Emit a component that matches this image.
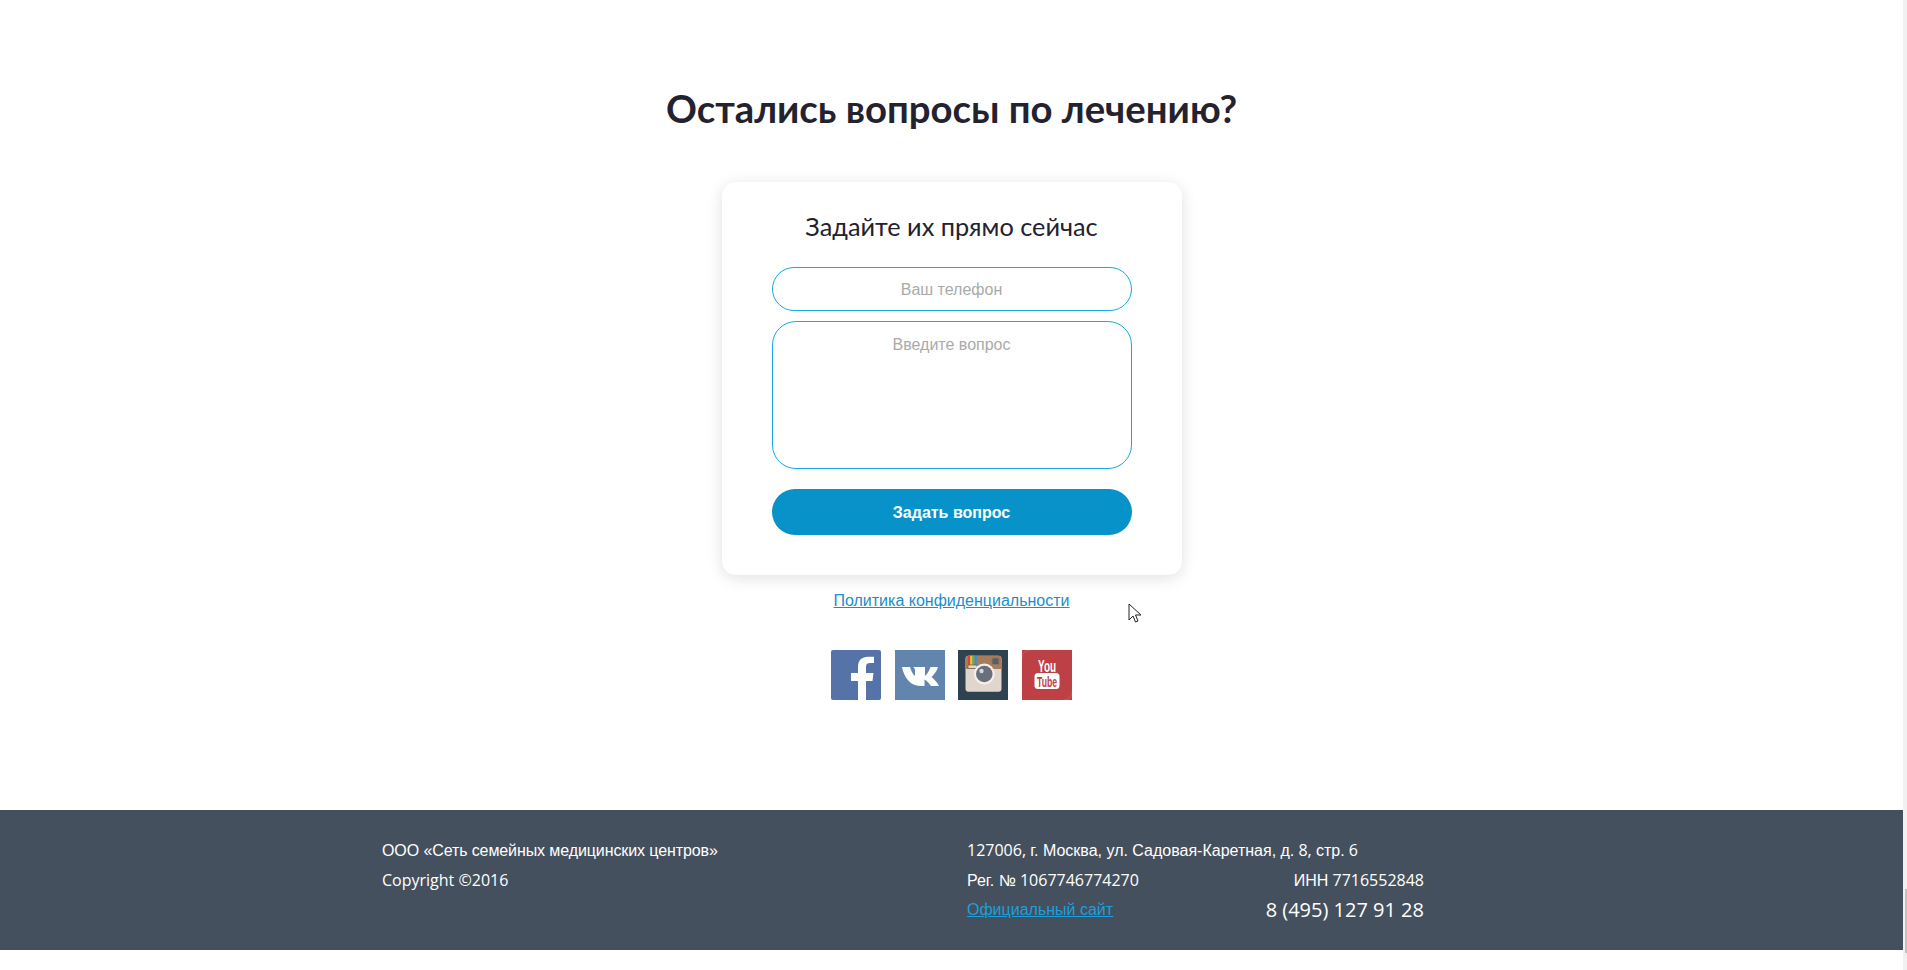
<div class="page">
	<main>
		<section class="ask">
			<h2>Остались вопросы по лечению?</h2>

			<form class="card" onsubmit={(e) => e.preventDefault()}>
				<h3>Задайте их прямо сейчас</h3>
				<input type="text" placeholder="Ваш телефон" />
				<textarea placeholder="Введите вопрос"></textarea>
				<button type="submit">Задать вопрос</button>
			</form>

			<a class="policy" href="#policy">Политика конфиденциальности</a>

			<div class="social">
				<a href="#fb" aria-label="Facebook">
					<svg viewBox="0 0 50 50" width="50" height="50">
						<rect width="50" height="50" rx="2" fill="#5673a9" />
						<path fill="#fff" d="M27 50V31h-7v-8h7v-6c0-7 4-10.300 10-10.300h6V13h-4c-3 0-4 1.200-4 4v6h7.500l-1 8H35v19z" />
					</svg>
				</a>
				<a href="#vk" aria-label="VK">
					<svg viewBox="0 0 50 50" width="50" height="50">
						<rect width="50" height="50" fill="#6285ae" />
						<path fill="#fff" d="M7 17h8c1.500 5 3.500 8 5 9v-6c0-1.500-1-2.300-2-3h12v9c2-1.500 4-5 5.500-9H43c-1 4-4.500 8-6.500 10 3 2.500 6 5.500 7.500 9h-8c-1.500-2.500-4-5-6.500-6.500V36h-4C15 36 9 27 7 17z" />
					</svg>
				</a>
				<a href="#ig" aria-label="Instagram">
					<svg viewBox="0 0 50 50" width="50" height="50">
						<rect width="50" height="50" fill="#2f4250" />
						<rect x="7.500" y="5.700" width="36" height="36" rx="3" fill="#e0d6cc" />
						<path fill="#a67c5b" d="M7.500 19V8.700c0-2 1-3 3-3h30c2 0 3 1 3 3V19z" />
						<rect x="10" y="5.700" width="2.200" height="9.500" fill="#d9453d" />
						<rect x="12.200" y="5.700" width="2.200" height="9.500" fill="#f2c230" />
						<rect x="14.400" y="5.700" width="2.200" height="9.500" fill="#6dae4f" />
						<rect x="16.600" y="5.700" width="2.200" height="9.500" fill="#3f8fd0" />
						<rect x="10" y="15" width="9" height="3.500" rx="1" fill="#e0d6cc" stroke="#5c4a3c" stroke-width=".6" />
						<rect x="34" y="8" width="7" height="6.500" rx="1" fill="#5b5f63" stroke="#8d7561" />
						<circle cx="26.300" cy="24" r="10.500" fill="#f4efe9" />
						<circle cx="26.300" cy="24" r="8.300" fill="#6a6f7e" />
						<circle cx="23.500" cy="21" r="2.200" fill="#d5d7dd" />
					</svg>
				</a>
				<a href="#yt" aria-label="YouTube">
					<svg viewBox="0 0 50 50" width="50" height="50">
						<rect width="50" height="50" fill="#bd4044" />
						<path d="M0 9Q0 0 9 0M50 41Q50 50 41 50" fill="none" stroke="#cf6a6d" stroke-width=".6" />
						<rect x="12.500" y="23" width="25" height="16" rx="3.500" fill="#fff" />
						<text x="16" y="22" textLength="18" lengthAdjust="spacingAndGlyphs" class="yt-you">You</text>
						<text x="15" y="36.500" textLength="20" lengthAdjust="spacingAndGlyphs" class="yt-tube">Tube</text>
					</svg>
				</a>
			</div>
		</section>

		<footer>
			<div class="foot-inner">
				<div class="foot-left">
					<p><span class="ru tight">ООО «Сеть семейных медицинских центров»</span></p>
					<p>Copyright ©2016</p>
				</div>
				<div class="foot-right">
					<p>127006, <span class="ru">г. Москва, ул. Садовая-Каретная, д.</span> 8, <span class="ru">стр.</span> 6</p>
					<p class="split"><span><span class="ru">Рег. №</span> 1067746774270</span><span><span class="ru">ИНН</span> 7716552848</span></p>
					<p class="split"><a class="ru" href="#site">Официальный сайт</a><span class="phone">8 (495) 127 91 28</span></p>
				</div>
			</div>
		</footer>
		<div class="tail"></div>
	</main>
	<aside class="scrollbar"><div class="thumb"></div></aside>
</div>

<svg class="cursor" width="14" height="22" viewBox="0 0 14 22">
	<path d="M1 1v16l4-4 2.500 6 2.500-1-2.500-6H13z" fill="#fff" stroke="#222" stroke-width="1" />
</svg>

<style>
	:global(body) {
		background: #fff;
		overflow: hidden;
	}

	.page {
		display: flex;
		height: 970px;
		font-family: "Liberation Sans", sans-serif;
	}

	main {
		flex: 1;
		display: flex;
		flex-direction: column;
	}

	.scrollbar {
		width: 4px;
		background: #f1f1f1;
		display: flex;
		justify-content: flex-end;
		padding-top: 889px;
		box-sizing: border-box;
	}

	.thumb {
		width: 2px;
		height: 64px;
		background: #c1c1c1;
	}

	.ask {
		flex: 1;
		display: flex;
		flex-direction: column;
		align-items: center;
		padding-top: 83px;
		box-sizing: border-box;
	}

	h2 {
		margin: 0 0 49px;
		font-family: Lato, sans-serif;
		font-size: 38.300px;
		line-height: 50px;
		font-weight: 700;
		color: #23222e;
	}

	.card {
		width: 460px;
		height: 393px;
		box-sizing: border-box;
		padding: 28px 50px 0;
		background: #fff;
		border-radius: 14px;
		box-shadow: 0 3px 16px rgba(0, 0, 0, 0.12);
		display: flex;
		flex-direction: column;
	}

	h3 {
		margin: 0 0 25px;
		font-family: Lato, sans-serif;
		font-size: 25.300px;
		line-height: 32px;
		font-weight: 400;
		text-align: center;
		color: #23222e;
	}

	input,
	textarea {
		display: block;
		width: 100%;
		box-sizing: border-box;
		border: 1px solid #19a9e0;
		background: #fff;
		font-family: "Liberation Sans", sans-serif;
		font-size: 16px;
		text-align: center;
		outline: none;
		resize: none;
	}

	input::placeholder,
	textarea::placeholder {
		color: #aaa;
		opacity: 1;
	}

	input {
		height: 44px;
		border-radius: 22px;
		padding: 2px 20px 0;
		margin-bottom: 10px;
	}

	textarea {
		height: 148px;
		border-radius: 24px;
		padding: 14px 20px;
		margin-bottom: 20px;
	}

	button {
		height: 46px;
		border: none;
		border-radius: 23px;
		padding: 2px 0 0;
		background: #0793c9;
		color: #fff;
		font-family: "Liberation Sans", sans-serif;
		font-size: 16px;
		font-weight: 700;
	}

	.policy {
		margin-top: 14px;
		font-size: 16px;
		line-height: 24px;
		color: #1a8fc9;
	}

	.social {
		display: flex;
		gap: 13.700px;
		margin-top: 37px;
	}

	.social a {
		display: block;
		width: 50px;
		height: 50px;
	}

	.social svg {
		display: block;
	}

	.yt-you {
		font: 700 16px "Liberation Sans", sans-serif;
		fill: #fff;
	}

	.yt-tube {
		font: 700 14px "Liberation Sans", sans-serif;
		fill: #bd4044;
	}

	footer {
		height: 140px;
		background: #45505e;
		color: #fff;
		font-family: "Open Sans", sans-serif;
		font-size: 16px;
	}

	.foot-inner {
		padding: 25px 0 0 382px;
		display: flex;
	}

	.foot-left {
		width: 585px;
	}

	.foot-right {
		width: 457px;
	}

	p {
		margin: 0;
		height: 30px;
		line-height: 30px;
	}

	.split {
		display: flex;
		justify-content: space-between;
	}

	.ru {
		font-family: "Liberation Sans", sans-serif;
	}

	.tight {
		letter-spacing: -0.1px;
	}

	.foot-right a {
		color: #1c9fdc;
	}

	.phone {
		font-size: 20px;
	}

	.tail {
		height: 20px;
	}

	.cursor {
		position: absolute;
		left: 1128px;
		top: 603px;
	}
</style>
